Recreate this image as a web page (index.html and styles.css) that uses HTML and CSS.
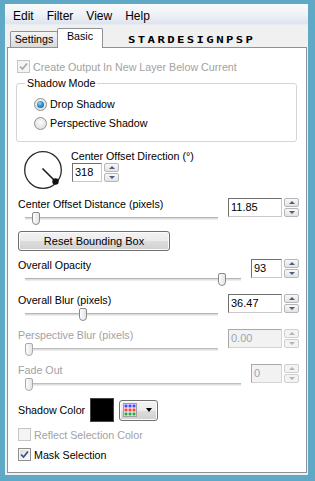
FILE: index.html
```html
<!DOCTYPE html>
<html>
<head>
<meta charset="utf-8">
<link rel="stylesheet" href="styles.css">
</head>
<body>
<div class="window">
  <div class="menubar">
    <span class="menu-item">Edit</span>
    <span class="menu-item">Filter</span>
    <span class="menu-item">View</span>
    <span class="menu-item">Help</span>
  </div>
  <div class="tabstrip">
    <div class="tab">Settings</div>
    <div class="tab tab-active">Basic</div>
    <div class="watermark">STARDESIGNPSP</div>
  </div>
  <div class="panel">
    <div class="check-row first disabled">
      <span class="cbox"><svg viewBox="0 0 11 11" width="11" height="11"><polyline points="2,5.5 4.5,8 9,2.5" fill="none" stroke="#a8a8a8" stroke-width="1.7"/></svg></span>
      <span>Create Output In New Layer Below Current</span>
    </div>

    <fieldset class="group">
      <legend>Shadow Mode</legend>
      <div class="radios">
        <div class="radio-row"><span class="radio on"></span><span>Drop Shadow</span></div>
        <div class="radio-row"><span class="radio"></span><span>Perspective Shadow</span></div>
      </div>
    </fieldset>

    <div class="dial-row">
      <svg class="dial" viewBox="0 0 40 40" width="40" height="40">
        <circle cx="20" cy="20" r="18.3" fill="none" stroke="#2b2b2b" stroke-width="1.3"/>
        <line x1="19.5" y1="18.5" x2="32.5" y2="31.5" stroke="#1a1a1a" stroke-width="1.6"/>
        <circle cx="32.5" cy="31.5" r="3.2" fill="#111"/>
      </svg>
      <div class="dial-controls">
        <div class="dial-label">Center Offset Direction (°)</div>
        <div class="spin">
          <div class="spin-box w-dial">318</div>
          <div class="spin-btns"><span class="spin-btn up"></span><span class="spin-btn down"></span></div>
        </div>
      </div>
    </div>

    <div class="slider-row first">
      <div class="slider-col">
        <div class="label">Center Offset Distance (pixels)</div>
        <div class="slider"><div class="track"></div><div class="thumb" style="left:7px"></div></div>
      </div>
      <div class="spin">
        <div class="spin-box w-wide">11.85</div>
        <div class="spin-btns"><span class="spin-btn up"></span><span class="spin-btn down"></span></div>
      </div>
    </div>

    <div class="reset-btn">Reset Bounding Box</div>

    <div class="slider-row after-btn">
      <div class="slider-col">
        <div class="label">Overall Opacity</div>
        <div class="slider"><div class="track"></div><div class="thumb" style="left:193px"></div></div>
      </div>
      <div class="spin">
        <div class="spin-box w-narrow">93</div>
        <div class="spin-btns"><span class="spin-btn up"></span><span class="spin-btn down"></span></div>
      </div>
    </div>

    <div class="slider-row">
      <div class="slider-col">
        <div class="label">Overall Blur (pixels)</div>
        <div class="slider"><div class="track"></div><div class="thumb" style="left:54px"></div></div>
      </div>
      <div class="spin">
        <div class="spin-box w-wide">36.47</div>
        <div class="spin-btns"><span class="spin-btn up"></span><span class="spin-btn down"></span></div>
      </div>
    </div>

    <div class="slider-row disabled">
      <div class="slider-col">
        <div class="label">Perspective Blur (pixels)</div>
        <div class="slider"><div class="track"></div><div class="thumb" style="left:0px"></div></div>
      </div>
      <div class="spin">
        <div class="spin-box w-wide">0.00</div>
        <div class="spin-btns"><span class="spin-btn up"></span><span class="spin-btn down"></span></div>
      </div>
    </div>

    <div class="slider-row disabled">
      <div class="slider-col">
        <div class="label">Fade Out</div>
        <div class="slider"><div class="track"></div><div class="thumb" style="left:0px"></div></div>
      </div>
      <div class="spin">
        <div class="spin-box w-narrow">0</div>
        <div class="spin-btns"><span class="spin-btn up"></span><span class="spin-btn down"></span></div>
      </div>
    </div>

    <div class="color-row">
      <span class="color-label">Shadow Color</span>
      <span class="swatch"></span>
      <span class="color-btn">
        <svg viewBox="0 0 14 14" width="14" height="14">
          <rect x="0.5" y="0.5" width="13" height="13" fill="#fff" stroke="#a0a0a0"/>
          <rect x="1.5" y="1.5" width="3" height="3" fill="#4646ff"/>
          <rect x="5.5" y="1.5" width="3" height="3" fill="#4646ff"/>
          <rect x="9.5" y="1.5" width="3" height="3" fill="#4646ff"/>
          <rect x="1.5" y="5.5" width="3" height="3" fill="#ff4040"/>
          <rect x="5.5" y="5.5" width="3" height="3" fill="#ff4040"/>
          <rect x="9.5" y="5.5" width="3" height="3" fill="#ff4040"/>
          <rect x="1.5" y="9.5" width="3" height="3" fill="#2ea44a"/>
          <rect x="5.5" y="9.5" width="3" height="3" fill="#2ea44a"/>
          <rect x="9.5" y="9.5" width="3" height="3" fill="#2ea44a"/>
        </svg>
        <span class="caret"></span>
      </span>
    </div>

    <div class="check-row reflect disabled">
      <span class="cbox"></span>
      <span>Reflect Selection Color</span>
    </div>

    <div class="check-row mask">
      <span class="cbox"><svg viewBox="0 0 11 11" width="11" height="11"><polyline points="2,5.5 4.5,8 9,2.5" fill="none" stroke="#3b4f8c" stroke-width="1.7"/></svg></span>
      <span>Mask Selection</span>
    </div>
  </div>
</div>
</body>
</html>
```

FILE: styles.css
```css
* { box-sizing: border-box; }
html, body { margin: 0; padding: 0; }
body {
  background: #5fa8c6;
  width: 315px;
  height: 481px;
  overflow: hidden;
  font-family: "Liberation Sans", Arial, sans-serif;
  font-size: 10.7px;
  color: #000;
}
.window {
  margin: 4px 7px 0 5px;
  height: 471px;
  background: #f0f0f0;
  display: flex;
  flex-direction: column;
}
.menubar {
  height: 21px;
  flex: none;
  display: flex;
  align-items: center;
  padding-left: 1.5px;
  padding-top: 4px;
  font-size: 12px;
  background: linear-gradient(#f9fafc, #eef1f6 55%, #dce3ee);
  border-bottom: 1px solid #e8ecf2;
}
.menu-item { padding: 0 6.5px; line-height: 16px; }
.tabstrip {
  height: 22px;
  flex: none;
  display: flex;
  align-items: flex-end;
  padding-left: 5px;
}
.tab {
  height: 16px;
  width: 48px;
  border: 1px solid #8e9196;
  border-bottom: none;
  border-radius: 2px 2px 0 0;
  background: linear-gradient(#f4f4f4, #e7e7e7 50%, #dadada);
  text-align: center;
  line-height: 15px;
}
.tab-active {
  height: 20px;
  width: 46px;
  margin-left: -1px;
  margin-bottom: -1px;
  padding-bottom: 4px;
  background: #fff;
  position: relative;
  z-index: 1;
}
.watermark {
  align-self: flex-start;
  margin-top: 11px;
  margin-left: 25px;
  font-family: "DejaVu Sans Mono", monospace;
  font-weight: bold;
  font-size: 8.2px;
  line-height: 8px;
  letter-spacing: 1.6px;
  transform: scaleX(1.5);
  transform-origin: left center;
  color: #000;
}
.panel {
  flex: 1;
  margin: 0 1px 2px 2px;
  background: #fff;
  border: 1px solid #8e9196;
  padding: 0 7px 0 10px;
}
.disabled, .disabled .label { color: #a2a2a2; }

/* checkboxes */
.check-row {
  display: flex;
  align-items: center;
  height: 13px;
  gap: 3px;
  white-space: nowrap;
}
.check-row.first { margin-top: 12px; margin-left: -1px; }
.check-row.reflect { margin-top: 6px; }
.check-row.mask { margin-top: 7px; }
.cbox {
  width: 13px;
  height: 13px;
  flex: none;
  border: 1px solid #8e8f8f;
  background: linear-gradient(135deg, #d8d8d8, #f8f8f8 80%);
  box-shadow: inset 0 0 0 1px #f6f6f6;
  display: flex;
  align-items: center;
  justify-content: center;
}
.disabled .cbox {
  border-color: #c5c5c5;
  background: #f4f4f4;
  box-shadow: none;
}

/* group box */
.group {
  margin: 4px 2px 0 -2px;
  padding: 0 0 11px 8px;
  border: 1px solid #d5d5d5;
  border-radius: 3px;
  min-width: 0;
}
.group legend { padding: 0 2px; line-height: 12px; }
.radios {
  margin-top: 8px;
  padding-left: 9px;
  display: flex;
  flex-direction: column;
  gap: 5px;
}
.radio-row { display: flex; align-items: center; gap: 3px; height: 14px; }
.radio {
  width: 13px;
  height: 13px;
  flex: none;
  border-radius: 50%;
  border: 1px solid #8e8f8f;
  background: radial-gradient(circle at 50% 40%, #fbfbfb, #d9d9d9);
  display: flex;
  align-items: center;
  justify-content: center;
}
.radio.on::after {
  content: "";
  width: 7px;
  height: 7px;
  border-radius: 50%;
  background: radial-gradient(circle at 40% 35%, #9ad8f8, #2d8ed6 45%, #0c4a8c);
}

/* dial */
.dial-row { display: flex; margin-top: 8px; height: 40px; }
.dial { margin-left: 5px; flex: none; }
.dial-controls { margin-left: 8px; }
.dial-label { line-height: 13px; white-space: nowrap; }
.dial-controls .spin { margin-left: 1px; margin-top: 0; }

/* sliders */
.slider-row { display: flex; align-items: flex-start; margin-top: 5px; }
.slider-row.first { margin-top: 7px; }
.slider-row.after-btn { margin-top: 7px; }
.slider-col { flex: 1; margin-right: 10px; min-width: 0; }
.label { line-height: 14px; height: 14px; white-space: nowrap; }
.slider { position: relative; height: 16px; margin-left: 7px; padding-top: 6px; }
.track {
  height: 3px;
  border-top: 1px solid #b4b4b4;
  border-bottom: 1px solid #ececec;
  background: #dedede;
}
.thumb {
  position: absolute;
  top: 1px;
  width: 8px;
  height: 13px;
  border: 1px solid #8a8a8a;
  border-radius: 2px 2px 4px 4px;
  background: linear-gradient(to right, #fdfdfd, #e4e4e4);
}

/* spin boxes */
.spin { display: flex; gap: 2px; margin-top: 1px; flex: none; }
.spin-box {
  height: 19px;
  border: 1px solid;
  border-color: #707070 #c9c9c9 #c9c9c9 #707070;
  background: #fff;
  padding-left: 2px;
  line-height: 17px;
  font-size: 11px;
  color: #000;
}
.w-dial { width: 30px; }
.w-wide { width: 54px; }
.w-narrow { width: 31px; }
.disabled .spin-box {
  background: #f2f2f2;
  border-color: #a8a8a8 #d4d4d4 #d4d4d4 #a8a8a8;
  color: #98a6b8;
}
.spin-btns { display: flex; flex-direction: column; gap: 1px; width: 15px; }
.spin-btn {
  height: 9px;
  border: 1px solid #b7b7b7;
  border-radius: 2px;
  background: linear-gradient(#f8f8f8, #e3e3e3);
  display: flex;
  align-items: center;
  justify-content: center;
}
.spin-btn::after {
  content: "";
  width: 0;
  height: 0;
  border-left: 3px solid transparent;
  border-right: 3px solid transparent;
}
.spin-btn.up::after { border-bottom: 3px solid #4b5f88; }
.spin-btn.down::after { border-top: 3px solid #4b5f88; }
.disabled .spin-btn { border-color: #cfcfcf; background: #f3f3f3; }
.disabled .spin-btn.up::after { border-bottom-color: #b4b4b4; }
.disabled .spin-btn.down::after { border-top-color: #b4b4b4; }
.disabled .track { border-top-color: #bdbdbd; }
.disabled .thumb { border-color: #a9a9a9; }

/* button */
.reset-btn {
  margin-top: 4px;
  width: 152px;
  height: 20px;
  border: 1px solid #707070;
  border-radius: 3px;
  background: linear-gradient(#f3f3f3, #ebebeb 50%, #dddddd 51%, #d0d0d0);
  box-shadow: inset 0 0 0 1px #fbfbfb;
  text-align: center;
  line-height: 18px;
  font-size: 11px;
}

/* color row */
.color-row { display: flex; align-items: center; height: 24px; margin-top: 5px; }
.color-label { width: 72px; white-space: nowrap; }
.swatch {
  width: 24px;
  height: 24px;
  background: #000;
  border: 1px solid #444;
}
.color-btn {
  margin-left: 5px;
  width: 39px;
  height: 21px;
  border: 1px solid #707070;
  border-radius: 3px;
  background: linear-gradient(#f3f3f3, #ebebeb 50%, #dddddd 51%, #d0d0d0);
  box-shadow: inset 0 0 0 1px #fbfbfb;
  display: flex;
  align-items: center;
  padding-left: 3px;
}
.caret {
  margin-left: 9px;
  width: 0;
  height: 0;
  border-left: 3.5px solid transparent;
  border-right: 3.5px solid transparent;
  border-top: 4px solid #000;
}
```
